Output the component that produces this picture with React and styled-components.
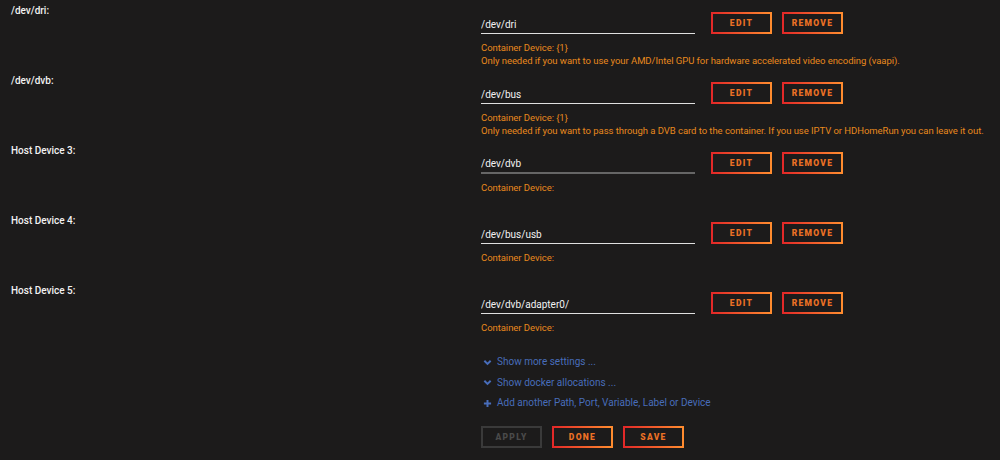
import React from 'react'
import styled, { createGlobalStyle, css } from 'styled-components';

const GlobalStyle = createGlobalStyle`
  html, body {
    margin: 0;
    padding: 0;
    background: #1c1b1b;
  }
  body {
    font-family: Roboto, "Liberation Sans", Arial, sans-serif;
    color: #f2f2f2;
  }
`;

const devices = [
  { label: '/dev/dri:', value: '/dev/dri', container: '{1}', note: 'Only needed if you want to use your AMD/Intel GPU for hardware accelerated video encoding (vaapi).' },
  { label: '/dev/dvb:', value: '/dev/bus', container: '{1}', note: 'Only needed if you want to pass through a DVB card to the container. If you use IPTV or HDHomeRun you can leave it out.' },
  { label: 'Host Device 3:', value: '/dev/dvb', container: '', focused: true },
  { label: 'Host Device 4:', value: '/dev/bus/usb', container: '' },
  { label: 'Host Device 5:', value: '/dev/dvb/adapter0/', container: '' },
];

const Chevron = () => (
  <svg width="9" height="9" viewBox="0 0 10 10">
    <polyline points="1.5,3 5,6.5 8.5,3" fill="none" stroke="currentColor" strokeWidth="2.2" />
  </svg>
);

const Plus = () => (
  <svg width="9" height="9" viewBox="0 0 10 10">
    <path d="M5 1v8M1 5h8" fill="none" stroke="currentColor" strokeWidth="2.2" />
  </svg>
);

function App() {
  return (
    <>
      <GlobalStyle />
      <Page>
        {devices.map((d) => (
          <Row key={d.label}>
            <Label>{d.label}</Label>
            <Field>
              <InputLine>
                <Input $focused={d.focused} defaultValue={d.value} readOnly />
                <Button>Edit</Button>
                <Button>Remove</Button>
              </InputLine>
              <Hint>Container Device: {d.container}</Hint>
              {d.note && <Hint>{d.note}</Hint>}
            </Field>
          </Row>
        ))}
        <Footer>
          <Links>
            <Link><Chevron /> Show more settings ...</Link>
            <Link><Chevron /> Show docker allocations ...</Link>
            <Link><Plus /> Add another Path, Port, Variable, Label or Device</Link>
          </Links>
          <Actions>
            <Button disabled>Apply</Button>
            <Button>Done</Button>
            <Button>Save</Button>
          </Actions>
        </Footer>
      </Page>
    </>
  )
}

export default App;

const Page = styled.div`
  padding: 4px 0 0 11px;
`;

const Row = styled.div`
  display: grid;
  grid-template-columns: 470px 1fr;
  height: 70px;
`;

const Label = styled.div`
  font-size: 10px;
  font-weight: 500;
  line-height: 14px;
  color: #f2f2f2;
`;

const Field = styled.div`
  display: flex;
  flex-direction: column;
  padding-top: 8px;
`;

const InputLine = styled.div`
  display: flex;
  align-items: center;
  gap: 10px;
  margin-bottom: 7px;
`;

const Input = styled.input`
  box-sizing: border-box;
  width: 214px;
  height: 22px;
  margin-right: 6px;
  padding: 3px 0 0 0;
  background: transparent;
  border: none;
  border-bottom: 1px solid #e0e0e0;
  color: #f2f2f2;
  font-family: inherit;
  font-size: 10px;
  outline: none;
  ${(p) => p.$focused && css`
    border-bottom: 2px solid #666;
  `}
`;

const Hint = styled.div`
  font-size: 9.5px;
  letter-spacing: -0.05px;
  line-height: 13px;
  color: #e8891d;
  white-space: nowrap;
`;

const Button = styled.button`
  box-sizing: border-box;
  width: 61px;
  height: 22px;
  padding: 0;
  background: transparent;
  border: 2px solid;
  border-image: linear-gradient(90deg, #e22828 0%, #ff8c2f 100%) 1;
  font-family: inherit;
  font-size: 8.5px;
  font-weight: 900;
  letter-spacing: 1.3px;
  text-transform: uppercase;
  color: #ec7125;
  cursor: pointer;
  &:disabled {
    border: 2px solid #3a3a3a;
    border-image: none;
    color: #4a4a4a;
    cursor: default;
  }
`;

const Footer = styled.div`
  margin-left: 470px;
  margin-top: -2px;
`;

const Links = styled.div`
  display: flex;
  flex-direction: column;
`;

const Link = styled.div`
  display: flex;
  align-items: center;
  gap: 5px;
  padding-left: 2px;
  font-size: 10px;
  line-height: 20.5px;
  color: #486dba;
`;

const Actions = styled.div`
  display: flex;
  gap: 10px;
  margin-top: 12px;
`;
